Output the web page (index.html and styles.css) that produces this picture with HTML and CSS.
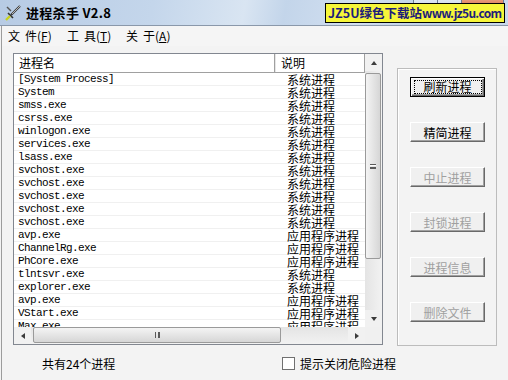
FILE: index.html
```html
<!DOCTYPE html>
<html lang="zh-CN">
<head>
    <meta charset="UTF-8">
    <title>进程杀手 V2.8</title>
    <link rel="stylesheet" href="styles.css">
</head>
<body>
    <div class="titlebar">
        <svg class="app-icon" width="18" height="18" viewBox="0 0 18 18">
            <line x1="3" y1="3" x2="7" y2="7" stroke="#555" stroke-width="1.5"/>
            <line x1="16" y1="2" x2="7" y2="11" stroke="#3a3a3a" stroke-width="2.2"/>
            <line x1="16" y1="2" x2="8" y2="10" stroke="#d8d8d8" stroke-width="0.8"/>
            <line x1="4" y1="9" x2="9" y2="14" stroke="#333" stroke-width="1.6"/>
            <line x1="6" y1="12" x2="2" y2="16" stroke="#c8d21e" stroke-width="2.4"/>
        </svg>
        <span class="title">进程杀手 V2.8</span>
        <div class="winbtns">
            <span class="wb"></span><span class="wb"></span><span class="wb close"></span>
        </div>
        <div class="banner">JZ5U绿色下载站<span class="url">www.jz5u.com</span></div>
    </div>

    <div class="frame">
        <div class="menubar">
            <span class="menu">文<i class="gap"></i>件(<u>F</u>)</span>
            <span class="menu">工<i class="gap"></i>具(<u>T</u>)</span>
            <span class="menu">关<i class="gap"></i>于(<u>A</u>)</span>
        </div>

        <div class="main">
            <div class="listview">
                <div class="lv-top">
                    <div class="lv-content">
                        <div class="lv-header">
                            <div class="hcol c1">进程名</div>
                            <div class="hcol c2">说明</div>
                        </div>
                        <div class="lv-rows" id="rows"></div>
                    </div>
                    <div class="vscroll">
                        <div class="sb-btn"><span class="arrow up"></span></div>
                        <div class="sb-track v">
                            <div class="thumb v"><span class="grip v"></span></div>
                        </div>
                        <div class="sb-btn"><span class="arrow down"></span></div>
                    </div>
                </div>
                <div class="lv-bottom">
                    <div class="hscroll">
                        <div class="sb-btn"><span class="arrow left"></span></div>
                        <div class="sb-track h">
                            <div class="thumb h"><span class="grip h"></span></div>
                        </div>
                        <div class="sb-btn"><span class="arrow right"></span></div>
                    </div>
                    <div class="corner"></div>
                </div>
            </div>

            <div class="groupbox">
                <button class="btn default"><span class="focus">刷新进程</span></button>
                <button class="btn">精简进程</button>
                <button class="btn" disabled>中止进程</button>
                <button class="btn" disabled>封锁进程</button>
                <button class="btn" disabled>进程信息</button>
                <button class="btn" disabled>删除文件</button>
            </div>
        </div>

        <div class="status">
            <span class="count">共有24个进程</span>
            <label class="check"><span class="box"></span>提示关闭危险进程</label>
        </div>
    </div>

    <script>
        var procs = [
            ["[System Process]", "系统进程"],
            ["System", "系统进程"],
            ["smss.exe", "系统进程"],
            ["csrss.exe", "系统进程"],
            ["winlogon.exe", "系统进程"],
            ["services.exe", "系统进程"],
            ["lsass.exe", "系统进程"],
            ["svchost.exe", "系统进程"],
            ["svchost.exe", "系统进程"],
            ["svchost.exe", "系统进程"],
            ["svchost.exe", "系统进程"],
            ["svchost.exe", "系统进程"],
            ["avp.exe", "应用程序进程"],
            ["ChannelRg.exe", "应用程序进程"],
            ["PhCore.exe", "应用程序进程"],
            ["tlntsvr.exe", "系统进程"],
            ["explorer.exe", "系统进程"],
            ["avp.exe", "应用程序进程"],
            ["VStart.exe", "应用程序进程"],
            ["Max.exe", "应用程序进程"]
        ];
        var rows = document.getElementById("rows");
        procs.forEach(function (p) {
            var row = document.createElement("div");
            row.className = "row";
            row.innerHTML = '<span class="name">' + p[0] + '</span><span class="desc">' + p[1] + '</span>';
            rows.appendChild(row);
        });
    </script>
</body>
</html>
```

FILE: styles.css
```css
* {
    margin: 0;
    padding: 0;
    box-sizing: border-box;
}

body {
    width: 508px;
    height: 380px;
    overflow: hidden;
    background: #f3f3f3;
    font-family: "Noto Sans CJK SC", "Liberation Sans", sans-serif;
    font-size: 12px;
    color: #000;
}

/* Title bar */
.titlebar {
    position: relative;
    height: 26px;
    display: flex;
    align-items: center;
    padding-left: 4px;
    border-bottom: 1px solid #8a98aa;
    background: linear-gradient(100deg, #b7cbe4 0%, #c4d6eb 30%, #d9e5f2 48%, #c3d5ea 56%, #d2dff0 70%, #bdd0e7 85%, #c9d9ec 100%);
}

.app-icon {
    flex: none;
}

.title {
    margin-left: 4px;
    font-size: 13px;
    font-weight: bold;
    letter-spacing: 0.3px;
}

.winbtns {
    position: absolute;
    top: -2px;
    right: 4px;
    display: flex;
}

.wb {
    width: 25px;
    height: 18px;
    border: 1px solid #6d7d92;
    border-radius: 0 0 3px 3px;
    background: linear-gradient(#dfe8f3, #c0d0e4);
    margin-left: -1px;
}

.wb.close {
    width: 43px;
    background: linear-gradient(#e8a080, #c8402a);
}

.banner {
    position: absolute;
    left: 325px;
    top: 3px;
    width: 180px;
    height: 20px;
    padding-left: 2px;
    background: #f6f63a;
    border: 1px solid #000;
    color: #1d1d7a;
    font-weight: bold;
    font-size: 12.5px;
    line-height: 18px;
    white-space: nowrap;
    overflow: hidden;
}

.url {
    font-size: 12px;
    letter-spacing: -0.7px;
}

/* Window body */
.frame {
    height: 354px;
    border-left: 1px solid #9c9c9c;
    margin-left: 1px;
}

.menubar {
    height: 20px;
    display: flex;
    align-items: center;
    padding-left: 6px;
    background: #f5f5f5;
}

.menu {
    width: 59px;
    line-height: 14px;
}

.gap {
    display: inline-block;
    width: 5px;
}

.main {
    display: flex;
    padding-top: 7px;
    padding-left: 11px;
}

/* List view */
.listview {
    width: 370px;
    height: 292px;
    border: 1px solid #828790;
    background: #fff;
    display: flex;
    flex-direction: column;
}

.lv-top {
    flex: 1;
    display: flex;
    min-height: 0;
}

.lv-content {
    width: 351px;
    overflow: hidden;
}

.lv-header {
    height: 19px;
    display: flex;
    border-bottom: 1px solid #a0a0a0;
    background: #fff;
    line-height: 17px;
}

.hcol {
    border-right: 1px solid #a0a0a0;
    box-shadow: 1px 0 0 #e6e6e6;
}

.hcol.c1 {
    width: 261px;
    padding-left: 5px;
}

.hcol.c2 {
    width: 90px;
    padding-left: 6px;
}

.row {
    height: 13px;
    display: flex;
    line-height: 13px;
    white-space: nowrap;
    background: linear-gradient(transparent 12px, #f0f0f0 12px);
}

.name {
    width: 261px;
    padding-left: 4px;
    font-family: "Liberation Mono", monospace;
    font-size: 11px;
    letter-spacing: -0.6px;
}

.desc {
    padding-left: 12px;
}

/* Scroll bars */
.vscroll {
    width: 17px;
    display: flex;
    flex-direction: column;
    background: #eaeaea;
}

.sb-btn {
    width: 17px;
    height: 17px;
    flex: none;
    display: flex;
    align-items: center;
    justify-content: center;
    background: #f1f1f1;
}

.sb-track {
    flex: 1;
    position: relative;
    background: linear-gradient(90deg, #e4e4e4, #f2f2f2);
}

.sb-track.h {
    background: linear-gradient(#e4e4e4, #f2f2f2);
}

.thumb {
    position: absolute;
    border: 1px solid #9a9a9a;
    border-radius: 2px;
    display: flex;
    align-items: center;
    justify-content: center;
}

.thumb.v {
    top: 2px;
    left: 0;
    width: 16px;
    height: 186px;
    background: linear-gradient(90deg, #f4f4f4, #e2e2e2 60%, #d6d6d6);
}

.thumb.h {
    left: 2px;
    top: 0;
    height: 16px;
    width: 248px;
    background: linear-gradient(#f4f4f4, #e2e2e2 60%, #d6d6d6);
}

.grip.v {
    width: 6px;
    height: 5px;
    border-top: 1px solid #5a5a5a;
    border-bottom: 1px solid #5a5a5a;
    background: linear-gradient(#fff 0 1px, transparent 1px 2px, #5a5a5a 2px 3px, transparent 3px);
}

.grip.h {
    width: 5px;
    height: 6px;
    border-left: 1px solid #5a5a5a;
    border-right: 1px solid #5a5a5a;
    background: linear-gradient(90deg, transparent 0 2px, #5a5a5a 2px 3px, transparent 3px);
}

.arrow {
    width: 0;
    height: 0;
    border: 3px solid transparent;
}

.arrow.up {
    border-bottom: 4px solid #3c3c3c;
    border-top: 0;
}

.arrow.down {
    border-top: 4px solid #3c3c3c;
    border-bottom: 0;
}

.arrow.left {
    border-right: 4px solid #3c3c3c;
    border-left: 0;
}

.arrow.right {
    border-left: 4px solid #3c3c3c;
    border-right: 0;
}

.lv-bottom {
    height: 17px;
    display: flex;
}

.hscroll {
    width: 351px;
    display: flex;
}

.corner {
    width: 17px;
    background: #f0f0f0;
}

/* Button group */
.groupbox {
    width: 100px;
    height: 278px;
    margin-top: 15px;
    margin-left: 14px;
    padding-top: 8px;
    border: 1px solid #bcbcbc;
    box-shadow: inset 1px 1px 0 #fff;
    display: flex;
    flex-direction: column;
    align-items: center;
    gap: 25px;
}

.btn {
    width: 75px;
    height: 20px;
    font-family: inherit;
    font-size: 12px;
    color: #000;
    background: #f0f0f0;
    border: 1px solid;
    border-color: #fff #696969 #696969 #fff;
    box-shadow: inset -1px -1px 0 #a0a0a0;
    padding-left: 1px;
}

.btn:disabled {
    color: #a0a0a0;
}

.btn.default {
    border: 1px solid #000;
    box-shadow: inset 1px 1px 0 #fff, inset -1px -1px 0 #696969, inset -2px -2px 0 #a0a0a0;
}

.focus {
    display: block;
    margin: 0 2px;
    height: 14px;
    line-height: 12px;
    border: 1px dotted #000;
}

/* Status line */
.status {
    height: 35px;
    display: flex;
    align-items: center;
    padding-left: 40px;
}

.count {
    width: 240px;
}

.check {
    display: flex;
    align-items: center;
    font-size: 12px;
}

.box {
    width: 13px;
    height: 13px;
    border: 1px solid #707070;
    background: #fff;
    margin-right: 5px;
}
```
